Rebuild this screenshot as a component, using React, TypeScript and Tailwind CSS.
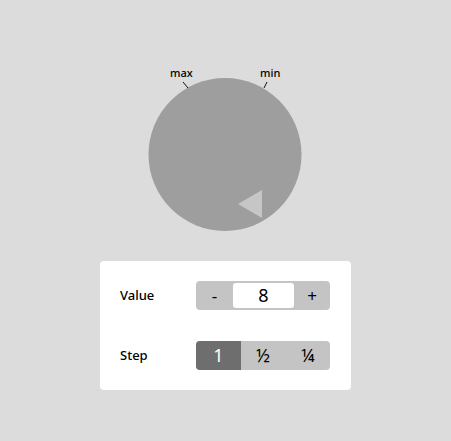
import React, { useState } from "react";

const font = { fontFamily: "'Noto Sans', 'Open Sans', sans-serif" };

function Knob() {
  return (
    <div className="relative w-[181px] h-[178px] mt-[62px]">
      <svg width="181" height="178" viewBox="0 0 181 178" className="absolute left-0 top-0">
        <circle cx="90" cy="92.5" r="76.5" fill="#9e9e9e" />
        <polygon points="103,142 127,128 127,156" fill="#c6c6c6" />
        <line x1="48" y1="20" x2="53" y2="26" stroke="#111" strokeWidth="1" />
        <line x1="132" y1="20" x2="129" y2="26" stroke="#111" strokeWidth="1" />
      </svg>
      <span className="absolute left-[35px] top-[4px] text-[11px] leading-[14px] font-medium text-black">max</span>
      <span className="absolute left-[125px] top-[4px] text-[11px] leading-[14px] font-medium text-black">min</span>
    </div>
  );
}

export default function App() {
  const [value, setValue] = useState(8);
  const [step, setStep] = useState(0);
  const steps = ["1", "½", "¼"];

  return (
    <div className="w-full h-[441px] bg-[#dcdcdc] flex flex-col items-center" style={font}>
      <Knob />
      <div className="mt-[21px] w-[251px] bg-white rounded-[4px] px-5 py-5 flex flex-col gap-[31px]">
        {/* Value row */}
        <div className="flex items-center">
          <span className="w-[76px] text-[13px] font-medium text-black">Value</span>
          <div className="flex items-center w-[134px] h-[29px] bg-[#c4c4c4] rounded-[4px]">
            <button
              className="w-[37px] h-full flex items-center justify-center text-[17px] text-black"
              onClick={() => setValue(value - 1)}
            >
              -
            </button>
            <div className="w-[61px] h-[25px] bg-white rounded-[3px] flex items-center justify-center text-[18px] text-black">
              {value}
            </div>
            <button
              className="flex-1 h-full flex items-center justify-center text-[17px] text-black"
              onClick={() => setValue(value + 1)}
            >
              +
            </button>
          </div>
        </div>

        {/* Step row */}
        <div className="flex items-center">
          <span className="w-[76px] text-[13px] font-medium text-black">Step</span>
          <div className="flex w-[134px] h-[29px] bg-[#c4c4c4] rounded-[4px] overflow-hidden">
            {steps.map((s, i) => (
              <button
                key={s}
                onClick={() => setStep(i)}
                className={`flex-1 h-full flex items-center justify-center ${
                  step === i ? "bg-[#6e6e6e] text-white text-[18px]" : "text-black text-[18px]"
                }`}
              >
                {s}
              </button>
            ))}
          </div>
        </div>
      </div>
    </div>
  );
}
